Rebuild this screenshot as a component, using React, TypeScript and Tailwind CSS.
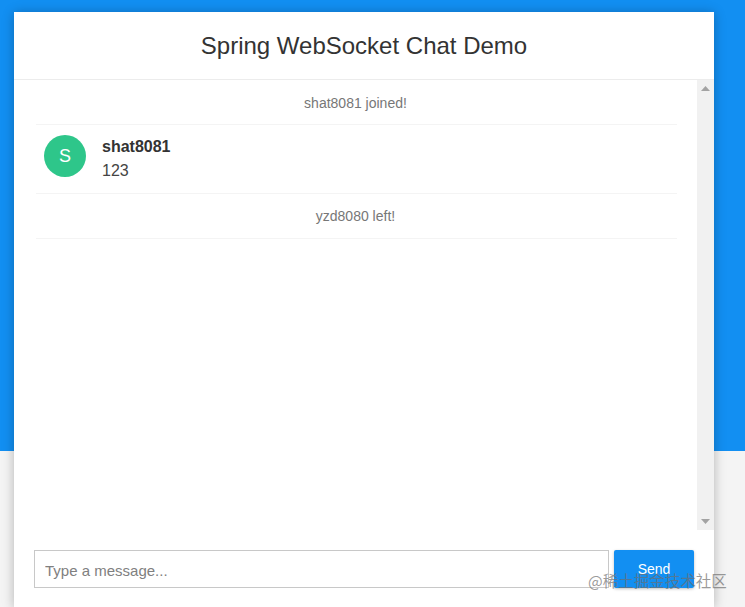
export default function App() {
  return (
    <div className="relative h-[607px] w-[745px] overflow-hidden bg-[linear-gradient(to_bottom,#128ff2_0,#128ff2_451px,#f4f4f4_451px,#f4f4f4_100%)] pt-3 pl-[14px] font-['Liberation_Sans',Arial,sans-serif] text-[#333333]">
      <div className="flex h-[595px] w-[700px] flex-col bg-white shadow-[0_1px_11px_rgba(0,0,0,0.27)]">
        <div className="flex h-[68px] shrink-0 items-center justify-center border-b border-[#ececec]">
          <h2 className="text-2xl font-normal">Spring WebSocket Chat Demo</h2>
        </div>
        <div className="flex h-[450px] shrink-0">
          <ul className="flex-1 pr-5 pl-[22px]">
            <li className="flex h-[45px] items-center justify-center border-b border-[#f4f4f4] pt-[1px] pr-[2px] text-sm text-[#777777]">shat8081 joined!</li>
            <li className="flex h-[69px] gap-4 border-b border-[#f4f4f4] pt-[10px] pl-2">
              <div className="flex h-[42px] w-[42px] items-center justify-center rounded-full bg-[#2ec68a] text-lg text-white">S</div>
              <div className="flex flex-col">
                <span className="text-base leading-[24px] font-bold">shat8081</span>
                <span className="text-base leading-[24px] text-[#444444]">123</span>
              </div>
            </li>
            <li className="flex h-[45px] items-center justify-center border-b border-[#f4f4f4] pr-[2px] text-sm text-[#777777]">yzd8080 left!</li>
          </ul>
          <div className="flex w-[17px] flex-col items-center justify-between bg-[#f1f1f1] py-[6px]">
            <svg width="9" height="5" viewBox="0 0 9 5"><path d="M4.5 0 9 5H0z" fill="#a3a3a3" /></svg>
            <svg width="9" height="5" viewBox="0 0 9 5"><path d="M0 0h9L4.5 5z" fill="#a3a3a3" /></svg>
          </div>
        </div>
        <form className="flex gap-[5px] pt-5 pl-5">
          <input readOnly placeholder="Type a message..." className="h-[38px] w-[575px] border border-[#c8c8c8] px-[10px] pt-[2px] text-[15px] outline-none placeholder:text-[#808080]" />
          <button type="button" className="h-[38px] w-20 rounded-[2px] bg-[#128ff2] text-sm text-white shadow-[0_1px_3px_rgba(0,0,0,0.25)]">Send</button>
        </form>
      </div>
      <span className="absolute top-[571px] left-[588px] text-[15.5px] leading-[18px] whitespace-nowrap text-[rgba(110,110,110,0.7)] font-['Noto_Sans_CJK_SC',sans-serif]">@稀土掘金技术社区</span>
    </div>
  );
}
